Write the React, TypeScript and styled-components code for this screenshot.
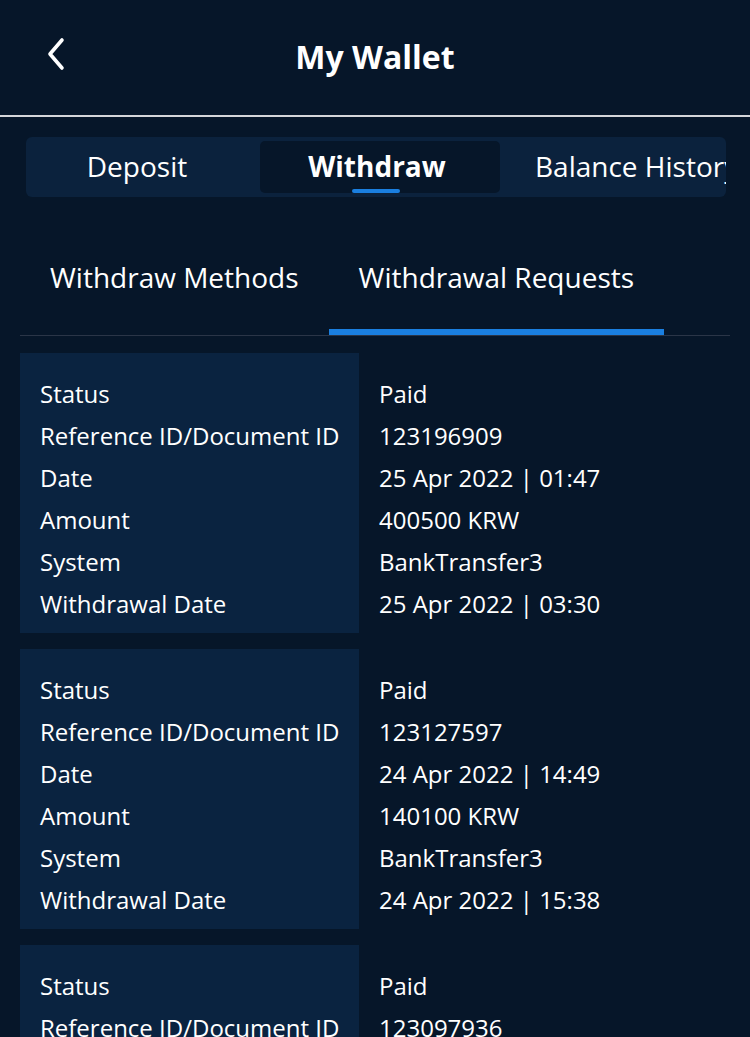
import React from "react";
import styled, { createGlobalStyle } from "styled-components";

const Global = createGlobalStyle`
  html, body { margin: 0; padding: 0; background: #061629; }
  body { font-family: "Open Sans", "Noto Sans", sans-serif; color: #fff; }
  * { box-sizing: border-box; }
`;

const Page = styled.div`
  width: 750px;
  height: 1037px;
  overflow: hidden;
  background: #061629;
`;

const Header = styled.header`
  height: 117px;
  display: flex;
  align-items: center;
  justify-content: center;
  position: relative;
  border-bottom: 2px solid #d4d6d9;
`;

const BackButton = styled.button`
  position: absolute;
  left: 38px;
  top: 36px;
  width: 36px;
  height: 36px;
  background: none;
  border: none;
  padding: 0;
  display: flex;
  align-items: center;
  justify-content: center;
`;

const Title = styled.h1`
  margin: 0;
  margin-top: -2px;
  font-size: 32px;
  font-weight: 700;
`;

const TabBar = styled.div`
  margin: 20px 24px 0 26px;
  height: 60px;
  background: #0b223d;
  border-radius: 6px;
  overflow: hidden;
  padding: 4px 0;
`;

const TabTrack = styled.div`
  display: flex;
  margin-left: -6px;
  height: 100%;
`;

const Tab = styled.div<{ $active?: boolean; $start?: number }>`
  flex: 0 0 240px;
  position: relative;
  display: flex;
  align-items: center;
  justify-content: ${(p) => (p.$start !== undefined ? "flex-start" : "center")};
  padding: 0 ${(p) => (p.$start !== undefined ? "0" : "6px")} 3px
    ${(p) => (p.$start !== undefined ? `${p.$start}px` : "0")};
  font-size: 28px;
  font-weight: ${(p) => (p.$active ? 700 : 400)};
  background: ${(p) => (p.$active ? "#061629" : "transparent")};
  border-radius: 5px;
  white-space: nowrap;
`;

const TabIndicator = styled.span`
  position: absolute;
  left: 92px;
  bottom: 0;
  width: 48px;
  height: 4px;
  border-radius: 2px;
  background: #1a7fe0;
`;

const SubTabs = styled.div`
  margin: 20px 20px 0;
  display: flex;
  border-bottom: 1px solid #2a3547;
`;

const SubTab = styled.div<{ $active?: boolean }>`
  height: 118px;
  padding: 8px 30px 0;
  display: flex;
  align-items: center;
  font-size: 28px;
  font-weight: 400;
  border-bottom: 6px solid ${(p) => (p.$active ? "#1a7fe0" : "transparent")};
`;

const List = styled.div`
  margin: 17px 20px 0;
  display: flex;
  flex-direction: column;
  gap: 16px;
`;

const Card = styled.div`
  display: grid;
  grid-template-columns: 339px 1fr;
  height: 280px;
  flex-shrink: 0;
`;

const LabelCol = styled.div`
  background: #0a2340;
  padding: 20px 0 8px 20px;
  display: flex;
  flex-direction: column;
`;

const ValueCol = styled.div`
  padding: 20px 0 8px 20px;
  display: flex;
  flex-direction: column;
`;

const Cell = styled.div`
  height: 42px;
  line-height: 42px;
  font-size: 24px;
  white-space: nowrap;
`;

const labels = [
  "Status",
  "Reference ID/Document ID",
  "Date",
  "Amount",
  "System",
  "Withdrawal Date",
];

const rows = [
  ["Paid", "123196909", "25 Apr 2022 | 01:47", "400500 KRW", "BankTransfer3", "25 Apr 2022 | 03:30"],
  ["Paid", "123127597", "24 Apr 2022 | 14:49", "140100 KRW", "BankTransfer3", "24 Apr 2022 | 15:38"],
  ["Paid", "123097936", "24 Apr 2022 | 11:02", "200000 KRW", "BankTransfer3", "24 Apr 2022 | 12:10"],
];

export default function App() {
  return (
    <Page>
      <Global />
      <Header>
        <BackButton aria-label="Back">
          <svg width="22" height="34" viewBox="0 0 22 34" fill="none">
            <path d="M17 3 L5 17 L17 31" stroke="#fff" strokeWidth="3.6" strokeLinecap="round" strokeLinejoin="round" />
          </svg>
        </BackButton>
        <Title>My Wallet</Title>
      </Header>
      <TabBar>
        <TabTrack>
          <Tab>Deposit</Tab>
          <Tab $active>
            Withdraw
            <TabIndicator />
          </Tab>
          <Tab $start={35}>Balance History</Tab>
        </TabTrack>
      </TabBar>
      <SubTabs>
        <SubTab>Withdraw Methods</SubTab>
        <SubTab $active>Withdrawal Requests</SubTab>
      </SubTabs>
      <List>
        {rows.map((r, i) => (
          <Card key={i}>
            <LabelCol>
              {labels.map((l) => (
                <Cell key={l}>{l}</Cell>
              ))}
            </LabelCol>
            <ValueCol>
              {r.map((v, j) => (
                <Cell key={j}>{v}</Cell>
              ))}
            </ValueCol>
          </Card>
        ))}
      </List>
    </Page>
  );
}
